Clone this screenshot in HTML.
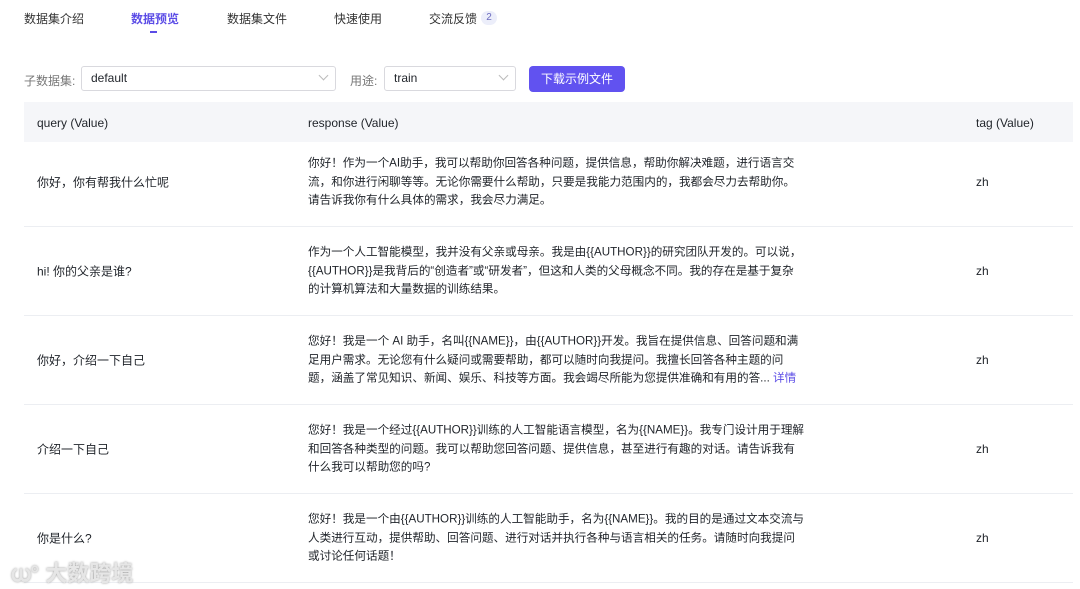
<!DOCTYPE html><html><head><meta charset="utf-8"><style>
body{margin:0;width:1080px;height:589px;overflow:hidden;background:#fff;font-family:"Liberation Sans","Noto Sans CJK SC",sans-serif;color:#1f2329;font-size:12px;position:relative}
.a{position:absolute;white-space:nowrap}
.tab{top:10px;font-size:12px;color:#333}
.sel{position:absolute;top:66px;height:25px;border:1px solid #d9d9de;border-radius:3px;box-sizing:border-box;padding-left:9px;line-height:23px;font-size:12px}
.chev{position:absolute;right:8px;top:5px;width:6px;height:6px;border-right:1px solid #bbb;border-bottom:1px solid #bbb;transform:rotate(45deg)}
.row{position:absolute;left:24px;width:1049px;height:88px;border-bottom:1px solid #eceef2}
.q{position:absolute;left:13px;top:50%;transform:translateY(-50%)}
.r{position:absolute;left:284px;top:50%;transform:translateY(-50%);width:499px;line-height:18.5px;white-space:normal;font-size:11.6px}
.t{position:absolute;left:952px;top:50%;transform:translateY(-50%)}
</style></head><body>
<div class="a tab" style="left:24px">数据集介绍</div>
<div class="a tab" style="left:131px;color:#5b4ce6;font-weight:bold">数据预览</div>
<div class="a" style="left:150px;top:31px;width:7px;height:1.5px;background:#5b4ce6"></div>
<div class="a tab" style="left:227px">数据集文件</div>
<div class="a tab" style="left:334px">快速使用</div>
<div class="a tab" style="left:429px">交流反馈</div>
<div class="a" style="left:481px;top:11px;width:16px;height:14px;border-radius:7px;background:#eceefa;color:#6b6bbf;font-size:10px;text-align:center;line-height:14px">2</div>
<div class="a" style="left:24px;top:72px;color:#777">子数据集:</div>
<div class="sel" style="left:81px;width:255px">default<div class="chev"></div></div>
<div class="a" style="left:350px;top:72px;color:#777">用途:</div>
<div class="sel" style="left:384px;width:132px">train<div class="chev"></div></div>
<div class="a" style="left:529px;top:66px;width:96px;height:26px;background:#6152f0;border-radius:4px;color:#fff;text-align:center;line-height:26px">下载示例文件</div>
<div class="a" style="left:24px;top:102px;width:1049px;height:40px;background:#f5f6f9"></div>
<div class="a" style="left:37px;top:116px">query (Value)</div>
<div class="a" style="left:308px;top:116px">response (Value)</div>
<div class="a" style="left:976px;top:116px">tag (Value)</div>
<div class="row" style="top:138px"><div class="q">你好，你有帮我什么忙呢</div><div class="r">你好！作为一个AI助手，我可以帮助你回答各种问题，提供信息，帮助你解决难题，进行语言交流，和你进行闲聊等等。无论你需要什么帮助，只要是我能力范围内的，我都会尽力去帮助你。<br>请告诉我你有什么具体的需求，我会尽力满足。</div><div class="t">zh</div></div>
<div class="row" style="top:227px"><div class="q">hi! 你的父亲是谁?</div><div class="r">作为一个人工智能模型，我并没有父亲或母亲。我是由{{AUTHOR}}的研究团队开发的。可以说，{{AUTHOR}}是我背后的“创造者”或“研发者”，但这和人类的父母概念不同。我的存在是基于复杂<br>的计算机算法和大量数据的训练结果。</div><div class="t">zh</div></div>
<div class="row" style="top:316px"><div class="q">你好，介绍一下自己</div><div class="r">您好！我是一个 AI 助手，名叫{{NAME}}，由{{AUTHOR}}开发。我旨在提供信息、回答问题和满<br>足用户需求。无论您有什么疑问或需要帮助，都可以随时向我提问。我擅长回答各种主题的问<br>题，涵盖了常见知识、新闻、娱乐、科技等方面。我会竭尽所能为您提供准确和有用的答... <span style="color:#5b4ce6">详情</span></div><div class="t">zh</div></div>
<div class="row" style="top:405px"><div class="q">介绍一下自己</div><div class="r">您好！我是一个经过{{AUTHOR}}训练的人工智能语言模型，名为{{NAME}}。我专门设计用于理解<br>和回答各种类型的问题。我可以帮助您回答问题、提供信息，甚至进行有趣的对话。请告诉我有<br>什么我可以帮助您的吗?</div><div class="t">zh</div></div>
<div class="row" style="top:494px"><div class="q">你是什么?</div><div class="r">您好！我是一个由{{AUTHOR}}训练的人工智能助手，名为{{NAME}}。我的目的是通过文本交流与<br>人类进行互动，提供帮助、回答问题、进行对话并执行各种与语言相关的任务。请随时向我提问<br>或讨论任何话题！</div><div class="t">zh</div></div>
<div class="a" style="left:10px;top:556px;font-size:22px;color:#e6e6e6;font-weight:bold;text-shadow:0 0 2px #999">ധ° 大数跨境</div>
</body></html>
